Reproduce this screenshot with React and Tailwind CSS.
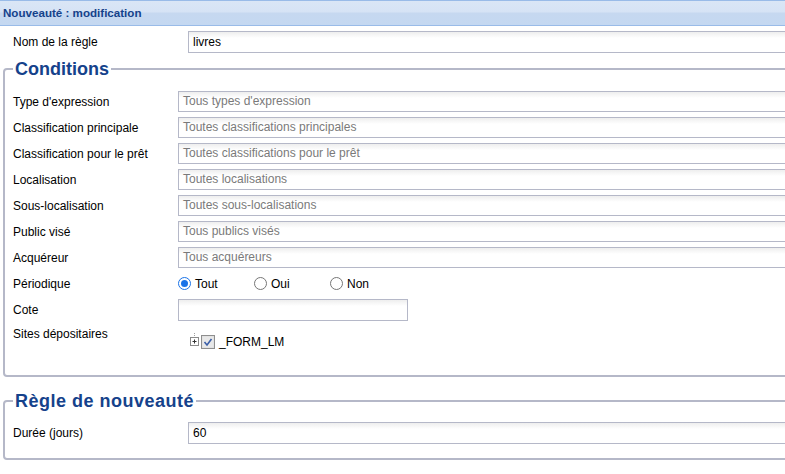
import React from "react";

const conditions = [
  ["Type d'expression", "Tous types d'expression"],
  ["Classification principale", "Toutes classifications principales"],
  ["Classification pour le prêt", "Toutes classifications pour le prêt"],
  ["Localisation", "Toutes localisations"],
  ["Sous-localisation", "Toutes sous-localisations"],
  ["Public visé", "Tous publics visés"],
  ["Acquéreur", "Tous acquéreurs"],
];

function Field({ children, muted, className = "" }) {
  return (
    <div
      className={`h-[21px] border border-[#b5b8c8] bg-[linear-gradient(#eeeeee,#ffffff_6px)] px-[4px] leading-[19px] whitespace-nowrap ${
        muted ? "text-[#7a7a7a]" : "text-black"
      } ${className}`}
    >
      {children}
    </div>
  );
}

function Radio({ label, checked }) {
  return (
    <div className="flex items-center gap-[4px]">
      {checked ? (
        <span className="w-[13px] h-[13px] rounded-full border border-[#1a73e8] flex items-center justify-center">
          <span className="w-[7px] h-[7px] rounded-full bg-[#1a73e8]" />
        </span>
      ) : (
        <span className="w-[13px] h-[13px] rounded-full border border-[#767676] bg-white" />
      )}
      <span>{label}</span>
    </div>
  );
}

export default function App() {
  return (
    <div className="w-[785px] h-[474px] overflow-hidden bg-white text-[12px] text-[#000] font-['Liberation_Sans',Arial,sans-serif]">
      {/* PANEL HEADER */}
      <div className="h-[26px] border-t border-b border-[#99bbe8] bg-[linear-gradient(#dae6f6_0,#d6e3f5_11px,#c6d8f0_12px,#c4d8f1_100%)] px-[3px] leading-[24px] text-[11.6px] font-bold text-[#15428b]">
        Nouveauté : modification
      </div>

      {/* NOM */}
      <div className="flex items-center mt-[5px] h-[22px]">
        <span className="w-[188px] pl-[13px]">Nom de la règle</span>
        <Field className="flex-1 h-[22px] leading-[20px] -mr-[10px]">livres</Field>
      </div>

      {/* CONDITIONS */}
      <fieldset className="ml-[3px] -mr-[20px] mt-[5px] border-2 border-[#b5b8c8] rounded-[4px] px-[8px] pb-[10px]">
        <legend className="ml-0 px-[2px] text-[18px] leading-[22px] font-bold text-[#15428b]">
          Conditions
        </legend>
        <div className="flex flex-col gap-[5px] mt-[11px]">
          {conditions.map(([label, value]) => (
            <div key={label} className="flex items-center h-[21px]">
              <span className="w-[165px] shrink-0">{label}</span>
              <Field muted className="flex-1">{value}</Field>
            </div>
          ))}
          <div className="flex items-center h-[21px]">
            <span className="w-[165px] shrink-0">Périodique</span>
            <div className="flex">
              <div className="w-[76px]"><Radio label="Tout" checked /></div>
              <div className="w-[76px]"><Radio label="Oui" /></div>
              <Radio label="Non" />
            </div>
          </div>
          <div className="flex items-center h-[21px]">
            <span className="w-[165px] shrink-0">Cote</span>
            <Field className="w-[230px] h-[22px]" />
          </div>
          <div className="flex items-start h-[40px]">
            <span className="w-[165px] shrink-0 leading-[18px]">Sites dépositaires</span>
            <div className="flex items-center mt-[8px] ml-[12px] gap-[1px]">
              <svg width="10" height="14" viewBox="0 0 10 14" className="mt-[-4px]">
                <path d="M4.5 0v3" stroke="#a0a0a0" strokeDasharray="1 1" />
                <rect x="0.5" y="4.5" width="8" height="8" fill="#fff" stroke="#8a8a8a" />
                <path d="M2.5 8.5h4M4.5 6.5v4" stroke="#333" />
              </svg>
              <svg width="14" height="14" viewBox="0 0 14 14">
                <rect x="0.5" y="0.5" width="13" height="13" fill="#dcdcdc" stroke="#8e8e8e" />
                <rect x="1.5" y="1.5" width="11" height="11" fill="#e8e8e8" />
                <path d="M3.5 7l2.5 3 4.5-6" fill="none" stroke="#3b5fa8" strokeWidth="1.6" />
              </svg>
              <span className="ml-[3px]">_FORM_LM</span>
            </div>
          </div>
        </div>
      </fieldset>

      {/* REGLE DE NOUVEAUTE */}
      <fieldset className="ml-[3px] -mr-[20px] mt-[13px] border-2 border-[#b5b8c8] rounded-[4px] px-[8px] pb-[14px]">
        <legend className="ml-0 px-[2px] text-[18px] leading-[22px] font-bold tracking-[0.5px] text-[#15428b]">
          Règle de nouveauté
        </legend>
        <div className="flex items-center h-[22px] mt-[10px]">
          <span className="w-[175px] shrink-0">Durée (jours)</span>
          <Field className="flex-1 h-[22px] leading-[20px]">60</Field>
        </div>
      </fieldset>
    </div>
  );
}
